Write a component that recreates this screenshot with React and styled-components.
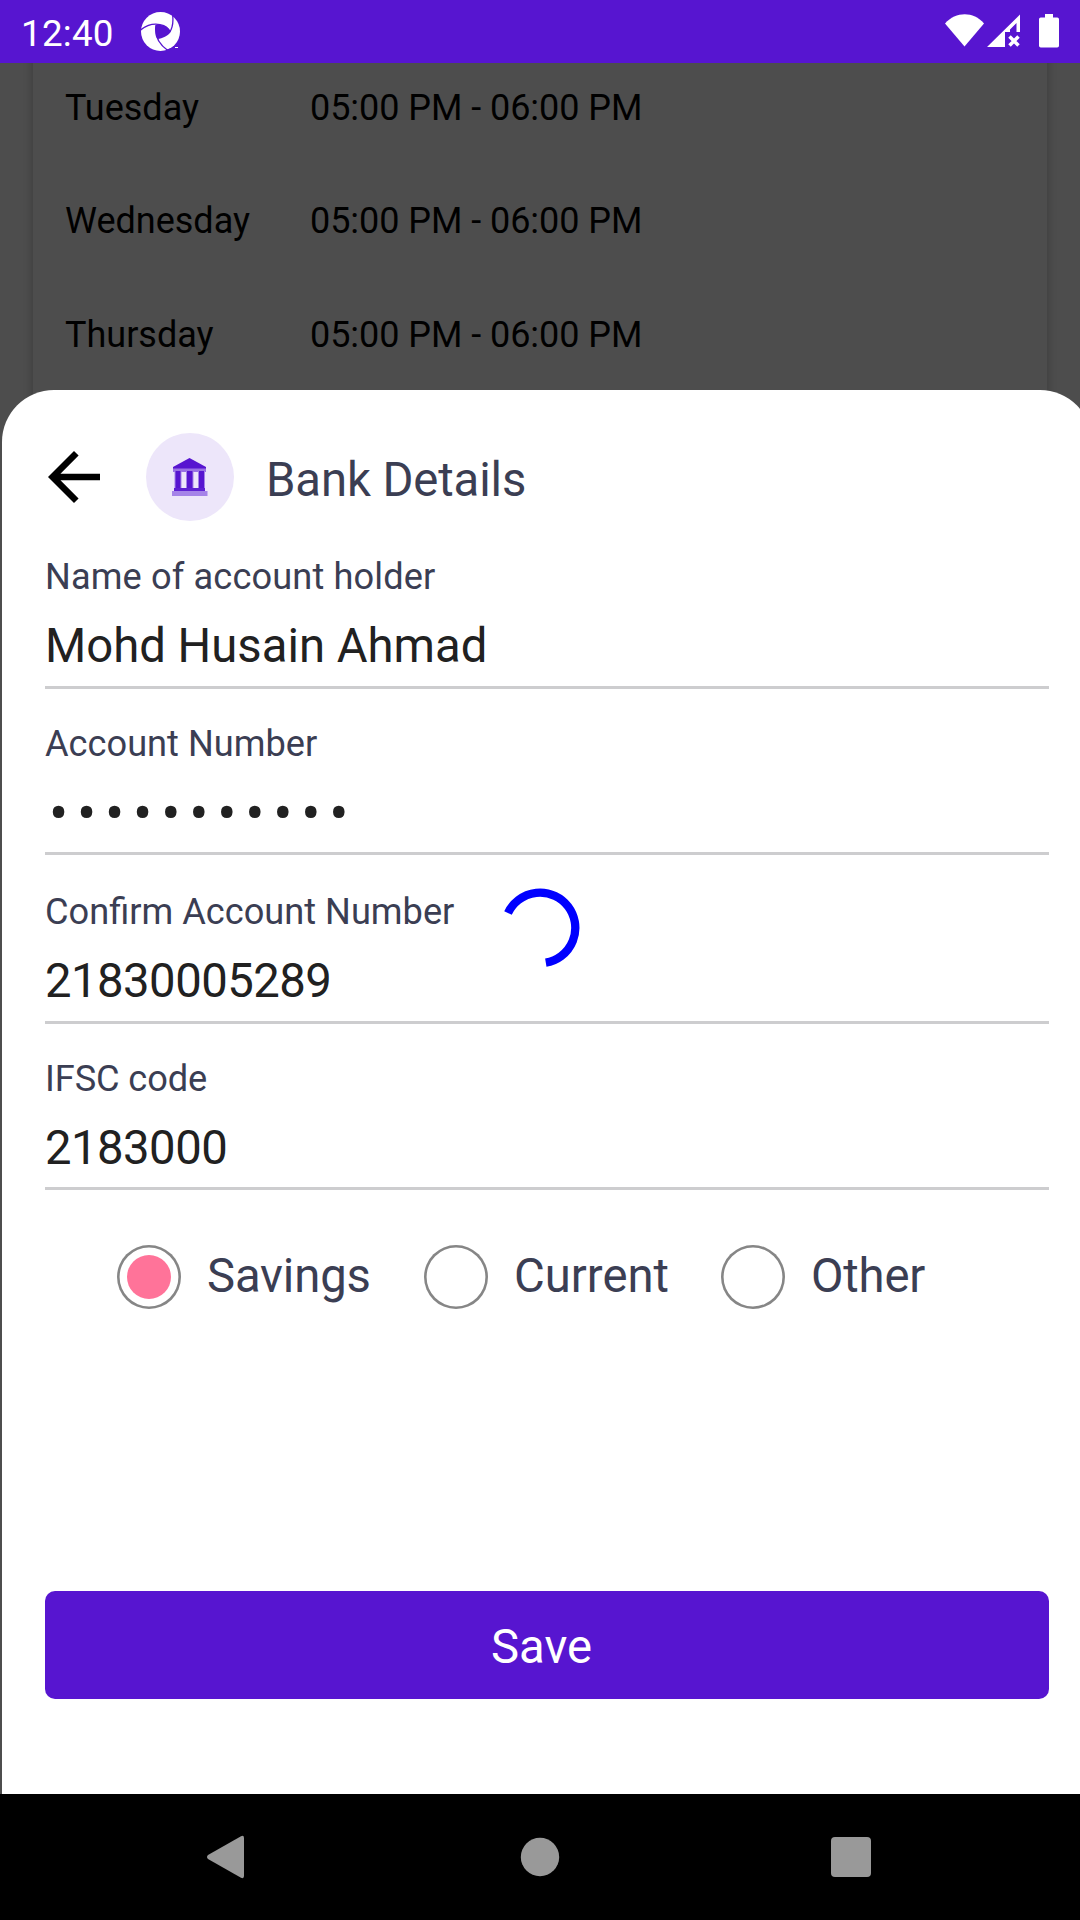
import React from "react";
import styled, { createGlobalStyle } from "styled-components";

const PURPLE = "#5715d0";
const INK = "#3b3e53";

const GlobalStyle = createGlobalStyle`
  body { margin: 0; background: #000; }
  * { box-sizing: border-box; }
`;

const Phone = styled.div`
  position: relative;
  width: 1080px;
  height: 1920px;
  display: flex;
  flex-direction: column;
  overflow: hidden;
  font-family: Roboto, "Liberation Sans", sans-serif;
`;

const StatusBar = styled.header`
  flex: none;
  height: 63px;
  padding: 0 21px;
  display: flex;
  align-items: flex-start;
  background: ${PURPLE};
  color: #fff;
`;

const Clock = styled.time`
  width: 120px;
  font-size: 36.75px;
  line-height: 67px;
  letter-spacing: 0.25px;
  white-space: nowrap;
`;

const AppMark = styled.svg`
  width: 39px;
  height: 39px;
  margin-top: 12px;
`;

const StatusIcons = styled.svg`
  width: 115px;
  height: 34px;
  margin: 14px 0 0 auto;
`;

const Backdrop = styled.main`
  flex: 1;
  padding: 0 33px;
  overflow: hidden;
  background: #4d4d4d;
`;

const ScheduleCard = styled.section`
  height: 1800px;
  margin-top: -11px;
  padding-left: 32px;
  background: #4d4d4d;
  box-shadow: 0 2px 9px rgba(0, 0, 0, 0.25);
`;

const ScheduleRow = styled.div`
  display: grid;
  grid-template-columns: 245px 1fr;
  height: ${(p) => p.$height}px;
  font-size: 36px;
  line-height: 113px;
  color: #000;
`;

const Hours = styled.span`
  letter-spacing: -0.05px;
`;

const Sheet = styled.section`
  position: absolute;
  top: 390px;
  left: 2px;
  width: 1090px;
  height: 1404px;
  padding: 43px 43px 95px;
  display: flex;
  flex-direction: column;
  background: #fff;
  border-radius: 52px 52px 0 0;
`;

const SheetHeader = styled.div`
  flex: none;
  display: flex;
  align-items: center;
  height: 89px;
`;

const BackArrow = styled.svg`
  width: 78px;
  height: 78px;
  margin: 0 0.5px 0.5px -10.5px;
`;

const Badge = styled.span`
  display: flex;
  align-items: center;
  justify-content: center;
  width: 88px;
  height: 88px;
  margin: 0 0 1px 33px;
  border-radius: 50%;
  background: #ede6fa;
`;

const Title = styled.h1`
  margin: 4px 0 0 32px;
  font-size: 47.25px;
  font-weight: 400;
  line-height: 56px;
  letter-spacing: -0.1px;
  color: ${INK};
`;

const Field = styled.label`
  flex: none;
  display: flex;
  flex-direction: column;
  height: ${(p) => p.$height}px;
  padding-top: ${(p) => p.$lead}px;
  border-bottom: 3px solid #cdcdcf;
`;

const FieldName = styled.span`
  height: 42px;
  margin-bottom: 20px;
  font-size: 36.2px;
  line-height: 42px;
  letter-spacing: ${(p) => p.$tracking || 0}px;
  color: ${INK};
`;

const FieldValue = styled.span`
  height: 56px;
  font-size: 47.25px;
  line-height: 56px;
  letter-spacing: ${(p) => (p.$numeric ? "-0.53px" : "0")};
  color: #212121;
`;

const MaskedValue = styled(FieldValue)`
  padding-left: 4px;
  font-size: 57px;
  line-height: 58px;
  letter-spacing: 8.8px;
`;

const RadioGroup = styled.div`
  flex: none;
  display: flex;
  margin: 55px 0 0 72px;
`;

const Option = styled.div`
  display: flex;
  align-items: center;
  width: ${(p) => p.$width}px;
  height: 64px;
`;

const Ring = styled.span`
  display: grid;
  place-items: center;
  width: 64px;
  height: 64px;
  border-radius: 50%;
  box-shadow: inset 0 0 0 2.6px #868686;
`;

const Dot = styled.span`
  width: 44px;
  height: 44px;
  border-radius: 50%;
  background: #ff7399;
`;

const OptionText = styled.span`
  margin: -3px 0 0 26px;
  font-size: 47.25px;
  line-height: 56px;
  letter-spacing: ${(p) => p.$tracking || 0}px;
  color: ${INK};
`;

const SaveButton = styled.button`
  flex: none;
  height: 108px;
  margin-top: auto;
  padding: 3px 11px 0 0;
  border: 0;
  border-radius: 10px;
  background: ${PURPLE};
  color: #fff;
  font: 400 47.25px Roboto, "Liberation Sans", sans-serif;
`;

const Spinner = styled.svg`
  position: absolute;
  top: 888px;
  left: 500px;
  width: 80px;
  height: 80px;
`;

const NavBar = styled.nav`
  flex: none;
  height: 126px;
  padding: 0 209px 0 204px;
  display: flex;
  align-items: center;
  justify-content: space-between;
  background: #000;
`;

const NavIcon = styled.svg`
  width: ${(p) => p.$w}px;
  height: 44px;
  fill: #999;
`;

const schedule = [
  { day: "Tuesday", height: 113 },
  { day: "Wednesday", height: 114 },
  { day: "Thursday", height: 113 },
];

const fields = [
  { name: "Name of account holder", value: "Mohd Husain Ahmad", height: 167, lead: 34, tracking: 0.12 },
  { name: "Account Number", value: "•••••••••••", height: 166, lead: 34, masked: true },
  { name: "Confirm Account Number", value: "21830005289", height: 169, lead: 36, numeric: true },
  { name: "IFSC code", value: "2183000", height: 166, lead: 34, tracking: -0.1, numeric: true },
];

const options = [
  { text: "Savings", width: 307, on: true, tracking: -0.15 },
  { text: "Current", width: 297 },
  { text: "Other", width: 230, tracking: -0.2 },
];

export default function App() {
  return (
    <Phone>
      <GlobalStyle />
      <StatusBar>
        <Clock>12:40</Clock>
        <AppMark viewBox="0 0 39 39">
          <circle cx="19.5" cy="19.5" r="19.5" fill="#fff" />
          <path d="M15 13C22 12 28 15.500 29.500 20C27 24 21.500 26.500 16.500 27C14 23 13.800 17 15 13Z" fill={PURPLE} />
          <path
            d="M-1 18.500C6 12.500 13 11.500 19 12.600S27 16 29.500 20M31.500 2C32.500 9 31.500 16 28.500 20.500M15 13C13.500 22 16 31 27.500 39"
            fill="none"
            stroke={PURPLE}
            strokeWidth="1.3"
          />
          <path d="M26 37.500L33 34.800L39 36V39H25Z" fill={PURPLE} />
          <path d="M34 35.500h3" stroke="#fff" strokeWidth="1" />
        </AppMark>
        <StatusIcons viewBox="0 0 115 34" fill="#fff">
          <path d="M1 9.500C12 -2.800 29.500 -2.800 40 9.500L20.500 32.500Z" />
          <path d="M43 33L76 .5V18H72.500V9L66 15.500V18H61V33Z" />
          <path d="M65.500 22.500L74.500 31.500M74.500 22.500L65.500 31.500" stroke="#fff" strokeWidth="3.500" />
          <path d="M101 0h8v3.500h4.200q1.800 0 1.800 1.800v26.400q0 1.800-1.800 1.800h-16.400q-1.800 0-1.800-1.800v-26.400q0-1.800 1.800-1.800h4.200z" />
        </StatusIcons>
      </StatusBar>

      <Backdrop>
        <ScheduleCard>
          {schedule.map((row) => (
            <ScheduleRow key={row.day} $height={row.height}>
              <span>{row.day}</span>
              <Hours>05:00 PM - 06:00 PM</Hours>
            </ScheduleRow>
          ))}
        </ScheduleCard>
      </Backdrop>

      <Sheet>
        <SheetHeader>
          <BackArrow viewBox="0 0 24 24">
            <path d="M20 11H7.830l5.590-5.590L12 4l-8 8 8 8 1.410-1.410L7.830 13H20v-2z" />
          </BackArrow>
          <Badge>
            <svg width="38" height="40" viewBox="0 0 38 40">
              <path d="M18.500 1L35 10V12H2V10Z" fill={PURPLE} />
              <path d="M2 11.500h33v3.500H2z" fill="#9a72e4" />
              <path d="M3.500 14h7v18h-7zM15 14h7.500v18h-7.500zM27 14h7v18h-7z" fill="#a583e8" />
              <path d="M4.500 14h5v18h-5zM16 14h5.500v18h-5.500zM28 14h5v18h-5z" fill={PURPLE} />
              <path d="M3 31h31v3H3z" fill="#5e20d2" />
              <path d="M1 34h35.500v5H1z" fill="#a583e8" />
            </svg>
          </Badge>
          <Title>Bank Details</Title>
        </SheetHeader>

        {fields.map((f) => (
          <Field key={f.name} $height={f.height} $lead={f.lead}>
            <FieldName $tracking={f.tracking}>{f.name}</FieldName>
            {f.masked ? (
              <MaskedValue>{f.value}</MaskedValue>
            ) : (
              <FieldValue $numeric={f.numeric}>{f.value}</FieldValue>
            )}
          </Field>
        ))}

        <RadioGroup>
          {options.map((o) => (
            <Option key={o.text} $width={o.width}>
              <Ring>{o.on && <Dot />}</Ring>
              <OptionText $tracking={o.tracking}>{o.text}</OptionText>
            </Option>
          ))}
        </RadioGroup>

        <SaveButton>Save</SaveButton>
      </Sheet>

      <Spinner viewBox="0 0 80 80">
        <path
          d="M8 25A35.300 35.300 0 1 1 45.800 74.700"
          fill="none"
          stroke="#0000ff"
          strokeWidth="8.300"
        />
      </Spinner>

      <NavBar>
        <NavIcon $w={44} viewBox="0 0 44 44">
          <path d="M4 20L37 1.200Q40 0 40 3V41Q40 44 37 42.800L4 24Q2 22 4 20Z" />
        </NavIcon>
        <NavIcon $w={40} viewBox="0 0 40 44">
          <circle cx="20" cy="22" r="19.200" />
        </NavIcon>
        <NavIcon $w={40} viewBox="0 0 40 44">
          <rect y="2" width="40" height="40" rx="4" />
        </NavIcon>
      </NavBar>
    </Phone>
  );
}
